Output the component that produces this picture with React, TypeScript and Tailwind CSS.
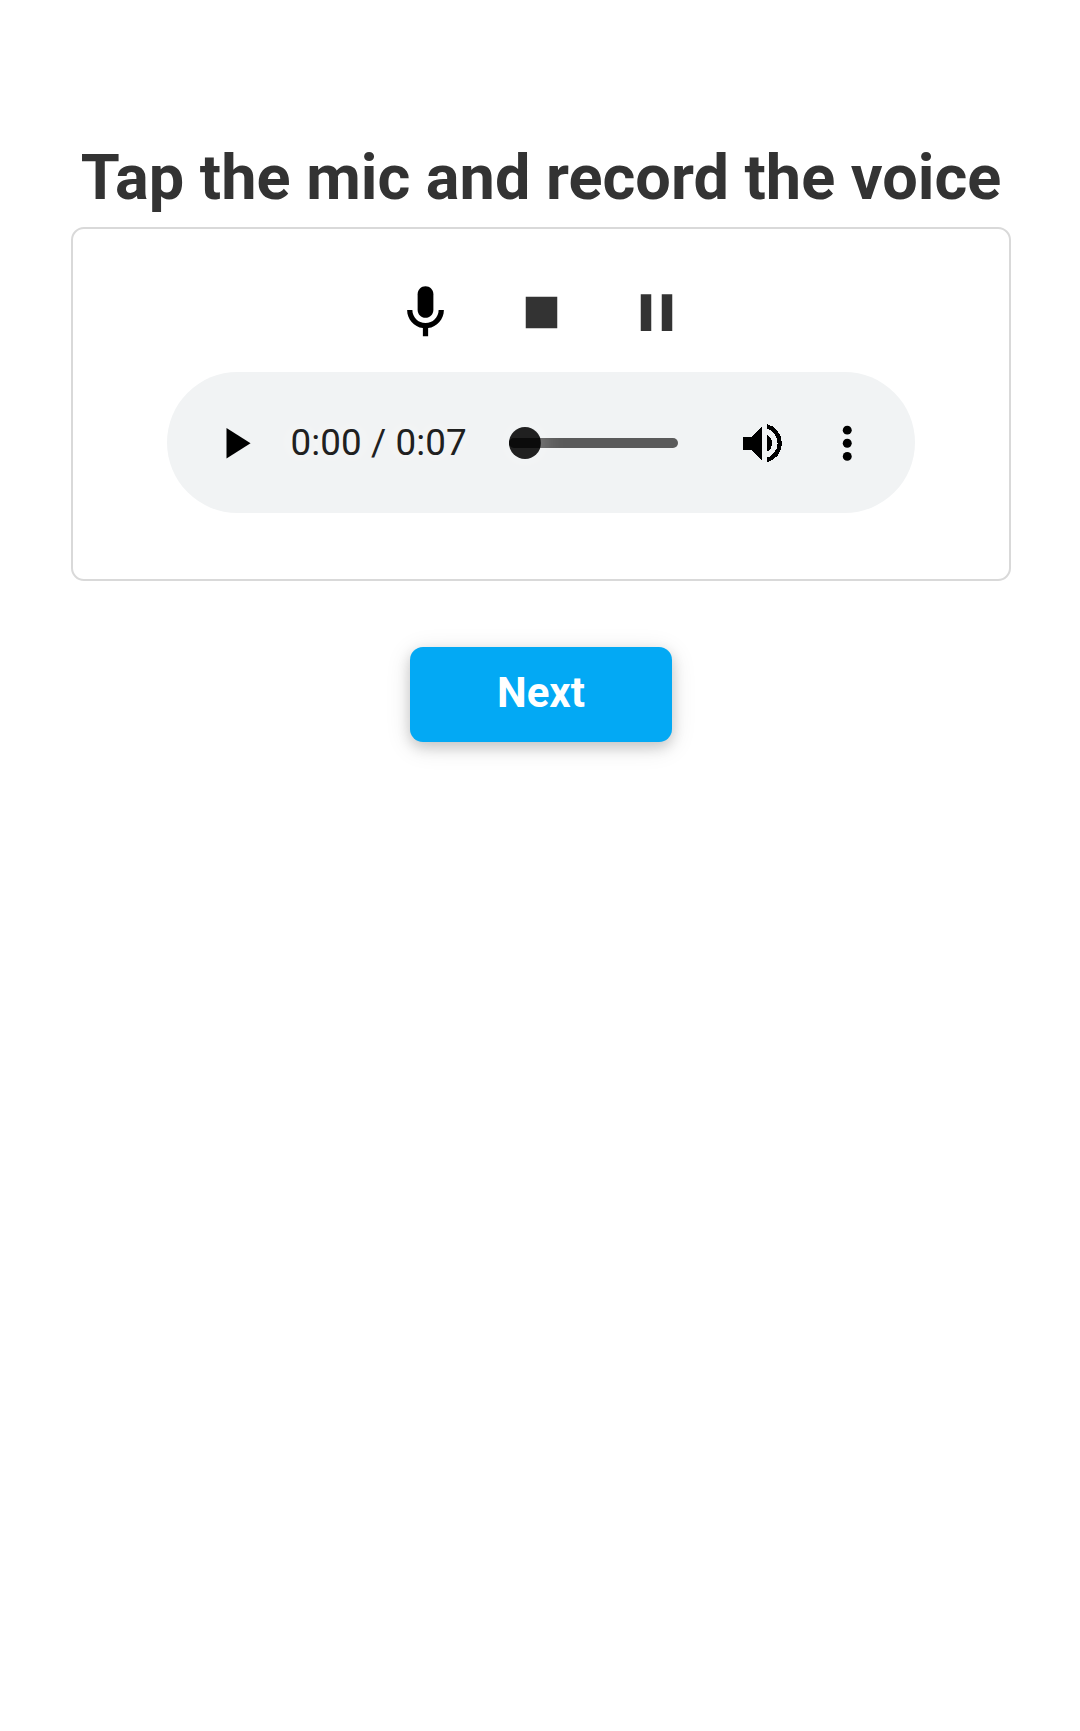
const iconSize = 'h-[63px] w-[63px] shrink-0';
const controlIcon = 'h-[52.5px] w-[52.5px] shrink-0';

function RecorderButtons() {
  return (
    <div className="ml-[321px] flex gap-[52.5px]">
      <button type="button" aria-label="Record">
        <svg viewBox="0 0 24 24" className={iconSize} fill="#000">
          <path d="M12 14c1.66 0 3-1.34 3-3V5c0-1.66-1.34-3-3-3S9 3.34 9 5v6c0 1.66 1.34 3 3 3z" />
          <path d="M17 11c0 2.76-2.24 5-5 5s-5-2.24-5-5H5c0 3.53 2.61 6.43 6 6.92V21h2v-3.08c3.39-.49 6-3.39 6-6.92h-2z" />
        </svg>
      </button>
      <button type="button" aria-label="Stop">
        <svg viewBox="0 0 24 24" className={iconSize} fill="#333">
          <path d="M6 6h12v12H6z" />
        </svg>
      </button>
      <button type="button" aria-label="Pause">
        <svg viewBox="0 0 24 24" className={iconSize} fill="#333">
          <path d="M6 19h4V5H6v14zm8-14v14h4V5h-4z" />
        </svg>
      </button>
    </div>
  );
}

function AudioPlayer() {
  return (
    <div className="ml-[94px] mt-[28px] flex h-[141px] w-[748px] items-center rounded-full bg-[#f1f3f4] pl-[42px] pt-[1px]">
      <svg viewBox="0 0 24 24" className={controlIcon} fill="#000">
        <path d="M8 5v14l11-7z" />
      </svg>
      <div className="mb-[1px] ml-[29px] w-[218.5px] whitespace-nowrap text-[36.75px] leading-[52px] tracking-[0.1px] text-[#202020] [text-shadow:0_0_26px_#fff]">
        0:00 / 0:07
      </div>
      <div className="relative h-[10.5px] w-[169px] rounded-full bg-[#5a5a5a]">
        <div className="absolute -top-[10.5px] left-0 h-[31.5px] w-[31.5px] rounded-full bg-[#202020] shadow-[0_0_26px_rgba(255,255,255,0.4)]" />
        <div className="absolute left-0 top-0 h-[10.5px] w-[31px] rounded-l-full bg-[#0b0b0b]" />
      </div>
      <svg viewBox="0 0 24 24" className={`${controlIcon} ml-[58px]`} fill="#000" shapeRendering="crispEdges">
        <path d="M3 9v6h4l5 5V4L7 9H3zm13.5 3c0-1.77-1.02-3.29-2.5-4.03v8.05c1.48-.73 2.5-2.25 2.5-4.02zM14 3.23v2.06c2.89.86 5 3.54 5 6.71s-2.11 5.85-5 6.71v2.06c4.01-.91 7-4.49 7-8.77s-2.99-7.86-7-8.77z" />
      </svg>
      <svg viewBox="0 0 24 24" className={`${controlIcon} ml-[32.3px]`} fill="#000">
        <circle cx="12" cy="6" r="2.05" />
        <circle cx="12" cy="12" r="2.05" />
        <circle cx="12" cy="18" r="2.05" />
      </svg>
    </div>
  );
}

export default function App() {
  return (
    <main className="flex min-h-[1731px] flex-col items-center bg-white pl-[2px] pt-[141px] font-['Roboto',sans-serif]">
      <h1 className="whitespace-nowrap text-[63px] font-bold leading-[74px] text-[#333]">
        Tap the mic and record the voice
      </h1>
      <section className="mt-[12px] h-[354px] w-[940px] rounded-[13px] border-2 border-[#d9d9d9] pt-[52px]">
        <RecorderButtons />
        <AudioPlayer />
      </section>
      <button
        type="button"
        className="mt-[66px] h-[95px] w-[262px] rounded-[13px] bg-[#03a9f4] pb-[4px] text-[42px] font-bold leading-none text-white shadow-[0_5px_13px_rgba(0,0,0,0.16),0_5px_26px_rgba(0,0,0,0.12)]"
      >
        Next
      </button>
    </main>
  );
}
